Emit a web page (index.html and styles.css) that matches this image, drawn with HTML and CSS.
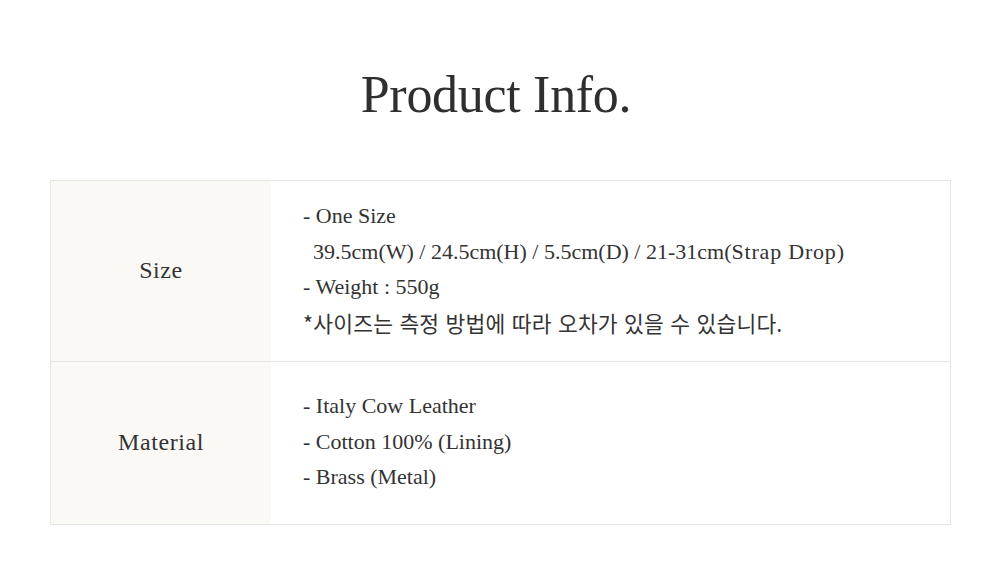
FILE: index.html
```html
<!DOCTYPE html>
<html lang="ko">
<head>
<meta charset="utf-8">
<link rel="stylesheet" href="styles.css">
</head>
<body>
<main class="page">
  <h1 class="title">Product Info.</h1>
  <div class="table">
    <div class="row row-size">
      <div class="label">Size</div>
      <div class="value">
        <p>- One Size</p>
        <p class="indent">39.5cm(W) / 24.5cm(H) / 5.5cm(D) / 21-31cm(<span class="wide">Strap Drop</span>)</p>
        <p>- Weight : 550g</p>
        <p class="ko">*사이즈는 측정 방법에 따라 오차가 있을 수 있습니다.</p>
      </div>
    </div>
    <div class="row row-material">
      <div class="label">Material</div>
      <div class="value">
        <p>- Italy Cow Leather</p>
        <p>- Cotton 100% (Lining)</p>
        <p>- Brass (Metal)</p>
      </div>
    </div>
  </div>
</main>
</body>
</html>
```

FILE: styles.css
```css
html, body {
  margin: 0;
  padding: 0;
  background: #ffffff;
}
body {
  font-family: "Liberation Serif", "Noto Sans CJK KR", serif;
  color: #333333;
}
.page {
  width: 902px;
  margin: 0 auto;
  padding-top: 64px;
  padding-left: 1px;
  box-sizing: border-box;
}
.title {
  margin: 0 0 54px;
  padding-right: 9px;
  text-align: center;
  font-weight: 400;
  font-size: 52px;
  line-height: 62px;
  letter-spacing: -0.3px;
  color: #2f2f2f;
}
.table {
  border: 1px solid #e5e5e3;
}
.row {
  display: flex;
}
.row + .row {
  border-top: 1px solid #e5e5e3;
}
.label {
  width: 220px;
  flex: none;
  background: #faf9f6;
  display: flex;
  align-items: center;
  justify-content: center;
  font-size: 24px;
  letter-spacing: 0.6px;
  color: #333;
}
.value {
  flex: 1;
  padding: 17px 0 19px 32px;
  display: flex;
  flex-direction: column;
  justify-content: center;
  font-size: 22px;
  color: #333;
}
.row-size .value {
  padding-bottom: 18px;
}
.row-material .value {
  min-height: 126px;
}
.value p {
  margin: 0;
  line-height: 35.5px;
  white-space: nowrap;
}
.indent {
  padding-left: 10px;
}
.wide {
  letter-spacing: 0.8px;
}
.ko {
  font-family: "Noto Sans CJK KR", sans-serif;
  font-size: 21.5px;
  letter-spacing: 0.2px;
  line-height: 33px;
  padding-bottom: 2.5px;
}
```
